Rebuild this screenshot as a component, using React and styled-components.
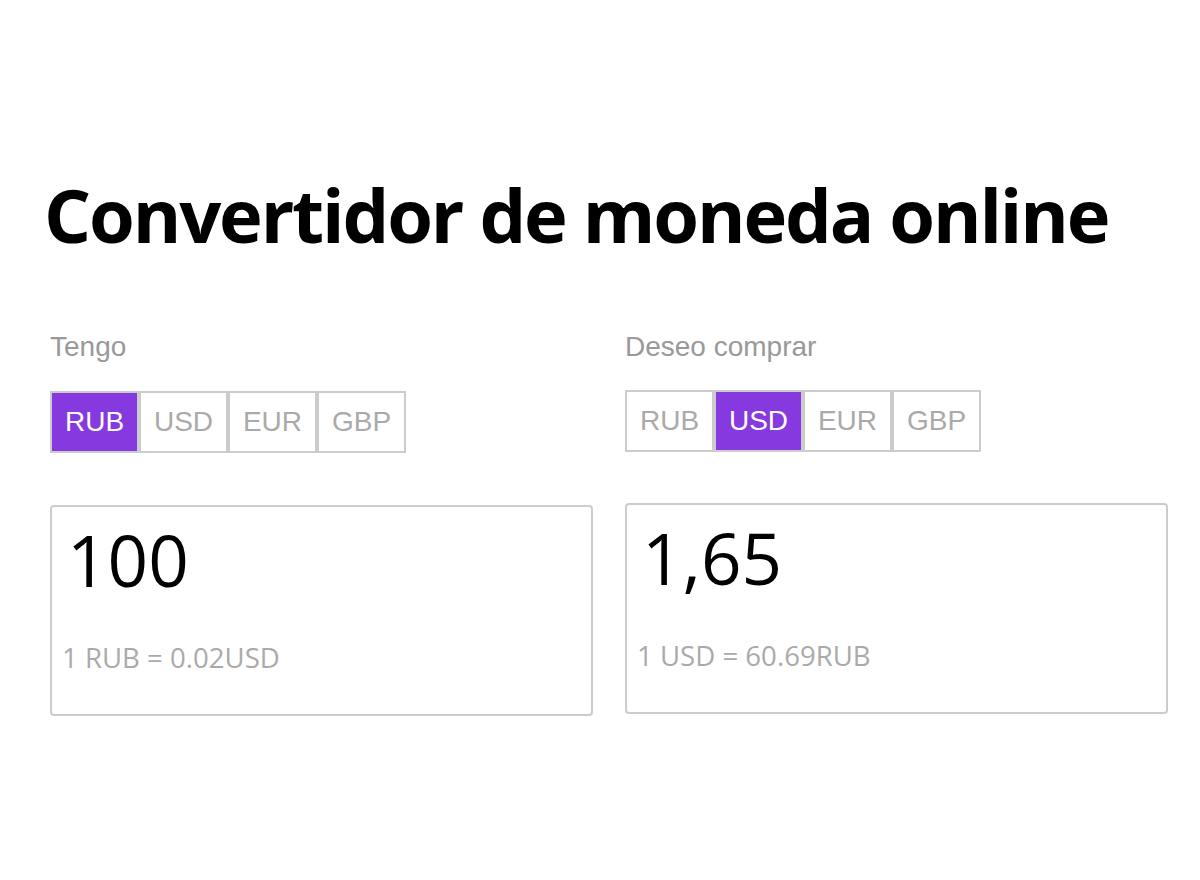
import React, { useState } from 'react';
import styled, { createGlobalStyle } from 'styled-components';

const GlobalStyle = createGlobalStyle`
  body {
    margin: 0;
    background: #fff;
    font-family: "Liberation Sans", Arial, sans-serif;
  }
`;

const Page = styled.div`
  padding: 165px 32px 0 50px;
`;

const Title = styled.h1`
  margin: 0 0 0 -6px;
  font-family: "Open Sans", sans-serif;
  font-weight: 700;
  font-size: 74px;
  letter-spacing: -2.15px;
  line-height: 100px;
  color: #000;
`;

const Columns = styled.div`
  display: grid;
  grid-template-columns: 543px 543px;
  gap: 32px;
  margin-top: 66px;
`;

const Column = styled.div`
  display: flex;
  flex-direction: column;
`;

const Label = styled.div`
  font-size: 28px;
  line-height: 32px;
  color: #999;
`;

const Tabs = styled.div`
  display: flex;
  gap: 2px;
  margin-top: ${(p) => 28 + (p.$shift || 0)}px;
`;

const Tab = styled.button`
  width: 89px;
  height: 62px;
  box-sizing: border-box;
  border: 2px solid #ccc;
  background: ${(p) => (p.$active ? '#8739e0' : '#fff')};
  color: ${(p) => (p.$active ? '#fff' : '#aaa')};
  font-family: "Liberation Sans", Arial, sans-serif;
  font-size: 28px;
  padding: 0;
  cursor: pointer;
  margin-left: -2px;
  &:first-child {
    margin-left: 0;
  }
`;

const Box = styled.div`
  margin-top: ${(p) => 52 + (p.$shift || 0)}px;
  height: 211px;
  box-sizing: border-box;
  border: 2px solid #ccc;
  border-radius: 4px;
  padding: 5px 12px 0 15px;
`;

const Amount = styled.div`
  font-family: "Open Sans", sans-serif;
  font-size: 71px;
  line-height: 96px;
  color: #000;
`;

const Rate = styled.div`
  margin-top: 30px;
  margin-left: -5px;
  font-family: "Open Sans", sans-serif;
  font-size: 27.6px;
  color: #aaa;
`;

const currencies = ['RUB', 'USD', 'EUR', 'GBP'];

const Side = ({ label, active, onPick, amount, rate, shift }) => (
  <Column>
    <Label>{label}</Label>
    <Tabs $shift={shift}>
      {currencies.map((c) => (
        <Tab key={c} $active={c === active} onClick={() => onPick(c)}>
          {c}
        </Tab>
      ))}
    </Tabs>
    <Box $shift={shift}>
      <Amount>{amount}</Amount>
      <Rate>{rate}</Rate>
    </Box>
  </Column>
);

export default function App() {
  const [from, setFrom] = useState('RUB');
  const [to, setTo] = useState('USD');

  return (
    <Page>
      <GlobalStyle />
      <Title>Convertidor de moneda online</Title>
      <Columns>
        <Side label="Tengo" active={from} onPick={setFrom} amount="100" rate="1 RUB = 0.02USD" />
        <Side label="Deseo comprar" active={to} onPick={setTo} amount="1,65" rate="1 USD = 60.69RUB" shift={-1} />
      </Columns>
    </Page>
  );
}
